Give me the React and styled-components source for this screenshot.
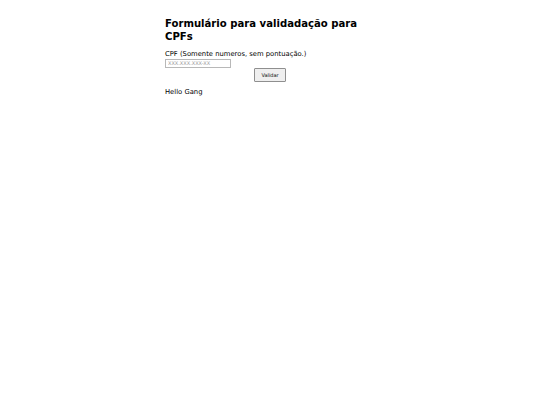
import React from "react";
import styled, { createGlobalStyle } from "styled-components";

const GlobalStyle = createGlobalStyle`
  body {
    margin: 0;
    background: #ffffff;
    font-family: "DejaVu Sans", sans-serif;
    color: #000000;
  }
`;

const Container = styled.div`
  width: 210px;
  margin: 0 auto;
  padding-top: 17px;
  display: flex;
  flex-direction: column;
`;

const Title = styled.h1`
  font-size: 10.1px;
  font-weight: 700;
  line-height: 13px;
  margin: 0 0 6.5px 0;
`;

const Form = styled.form`
  display: flex;
  flex-direction: column;
`;

const Label = styled.label`
  font-size: 6.8px;
  line-height: 9px;
`;

const Input = styled.input`
  width: 66px;
  height: 9px;
  box-sizing: border-box;
  border: 1px solid #b8b8b8;
  font-size: 5px;
  padding: 0 2px;
  font-family: "DejaVu Sans", sans-serif;
  outline: none;

  &::placeholder {
    color: #9a9a9a;
  }
`;

const Button = styled.button`
  align-self: center;
  width: 32px;
  height: 14px;
  font-size: 5px;
  font-family: "DejaVu Sans", sans-serif;
  background: #efefef;
  border: 1px solid #8f8f8f;
  border-radius: 1px;
  padding: 0;
`;

const Message = styled.p`
  font-size: 6.8px;
  line-height: 9px;
  margin: 6.5px 0 0 0;
`;

export default function App() {
  return (
    <>
      <GlobalStyle />
      <Container>
        <Title>Formulário para validadação para CPFs</Title>
        <Form onSubmit={(e) => e.preventDefault()}>
          <Label htmlFor="cpf">CPF (Somente numeros, sem pontuação.)</Label>
          <Input id="cpf" type="text" placeholder="XXX.XXX.XXX-XX" />
          <Button type="submit">Validar</Button>
        </Form>
        <Message>Hello Gang</Message>
      </Container>
    </>
  );
}
